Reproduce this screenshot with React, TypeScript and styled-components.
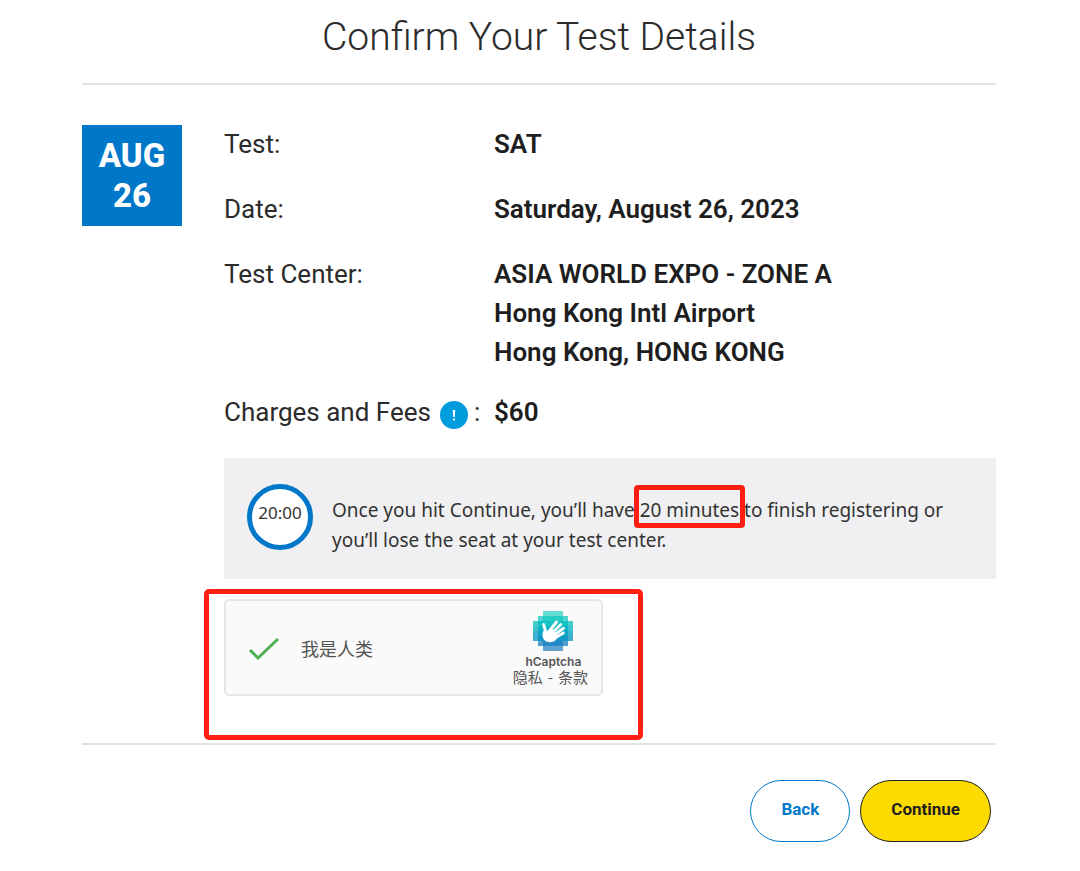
import React from "react";
import styled, { createGlobalStyle } from "styled-components";

const GlobalStyle = createGlobalStyle`
  *, *::before, *::after { box-sizing: border-box; }
  body {
    margin: 0;
    background: #fff;
    color: #2b2b2b;
    font-family: Roboto, "Liberation Sans", sans-serif;
  }
`;

const Page = styled.main`
  padding: 12px 84px 28px 82px;
`;

const Title = styled.h1`
  margin: 0;
  padding-bottom: 21px;
  border-bottom: 2px solid #e2e2e2;
  font-size: 39px;
  line-height: 50px;
  font-weight: 300;
  text-align: center;
`;

const Body = styled.section`
  display: flex;
  align-items: flex-start;
  gap: 42px;
  padding: 40px 0 47px;
  border-bottom: 2px solid #e2e2e2;
`;

const DateBadge = styled.time`
  flex: none;
  display: flex;
  flex-direction: column;
  justify-content: center;
  width: 100px;
  height: 101px;
  background: #0077c8;
  color: #fff;
  font-size: 33px;
  line-height: 40px;
  font-weight: 800;
  text-align: center;
`;

const Content = styled.div`
  flex: 1;
  min-width: 0;
`;

const Details = styled.dl`
  margin: 0 0 26px;
  display: grid;
  grid-template-columns: 270px 1fr;
  font-size: 26px;
  line-height: 39px;
`;

const Label = styled.dt<{ $gap: number }>`
  display: flex;
  align-items: center;
  height: 39px;
  margin-bottom: ${(p) => p.$gap}px;
`;

const Value = styled.dd<{ $gap: number }>`
  margin: 0 0 ${(p) => p.$gap}px;
  color: #1e1e1e;
  font-weight: 600;
`;

const InfoButton = styled.button`
  display: flex;
  width: 28px;
  height: 28px;
  margin: 4px 6px 0 9px;
  padding: 0;
  border: 0;
  border-radius: 50%;
  background: #009cde;
`;

const Notice = styled.div`
  display: flex;
  align-items: center;
  gap: 19px;
  min-height: 121px;
  padding: 0 23px;
  background: #f0f0f2;
  color: #333;
  font-family: "Noto Sans", "Open Sans", sans-serif;
`;

const Timer = styled.div`
  flex: none;
  width: 66px;
  height: 66px;
  margin-bottom: 4px;
  border: 5px solid #0077c8;
  border-radius: 50%;
  background: #fff;
  font-size: 17px;
  line-height: 48px;
  text-align: center;
`;

const NoticeText = styled.p`
  margin: 0;
  padding-top: 12px;
  font-size: 19px;
  line-height: 30px;
`;

const Marked = styled.span`
  position: relative;
  &::after {
    content: "";
    position: absolute;
    inset: -12px -6px -5px;
    border: 5px solid #ff1e12;
    border-radius: 4px;
  }
`;

const CaptchaArea = styled.div`
  position: relative;
  width: 379px;
  margin-top: 20px;
  &::after {
    content: "";
    position: absolute;
    inset: -10px -40px -44px -20px;
    border: 5px solid #ff1e12;
    border-radius: 5px;
    pointer-events: none;
  }
`;

const Captcha = styled.div`
  display: flex;
  align-items: center;
  justify-content: space-between;
  height: 97px;
  padding: 0 13px 0 22px;
  border: 2px solid #e6e6e6;
  border-radius: 5px;
  background: #fafafa;
  color: #555;
  font-family: "Noto Sans CJK SC", sans-serif;
`;

const CheckLabel = styled.label`
  display: flex;
  align-items: center;
  gap: 21px;
  font-size: 18px;
  line-height: 24px;
`;

const CheckMark = styled.span`
  display: grid;
  padding-top: 4px;
  > * { grid-area: 1 / 1; }
`;

const CheckInput = styled.input`
  appearance: none;
  width: 32px;
  height: 26px;
  margin: 0;
  & + svg { visibility: hidden; pointer-events: none; }
  &:checked + svg { visibility: visible; }
`;

const Brand = styled.div`
  display: flex;
  flex-direction: column;
  align-items: center;
`;

const BrandMark = styled.div`
  display: flex;
  flex-direction: column;
  align-items: center;
  gap: 4px;
  padding-left: 6px;
`;

const BrandName = styled.span`
  font-family: Inter, sans-serif;
  font-size: 12px;
  line-height: 14px;
  font-weight: 600;
`;

const BrandLinks = styled.div`
  display: flex;
  gap: 5px;
  font-size: 15px;
  line-height: 16px;
`;

const BrandLink = styled.a`
  color: inherit;
  text-decoration: none;
`;

const Actions = styled.footer`
  display: flex;
  justify-content: flex-end;
  gap: 10px;
  padding: 35px 5px 0 0;
`;

const Button = styled.button<{ $primary?: boolean }>`
  height: 62px;
  padding: 0 30px 5px;
  border: 1px solid ${(p) => (p.$primary ? "#1e1e1e" : "#0077c8")};
  border-radius: 31px;
  background: ${(p) => (p.$primary ? "#fedb00" : "#fff")};
  color: ${(p) => (p.$primary ? "#1e1e1e" : "#0077c8")};
  font-family: inherit;
  font-size: 17px;
  font-weight: 700;
`;

const ROWS: [number, number][] = [[2, 4], [1, 6], [0, 8], [0, 8], [0, 8], [0, 8], [1, 6], [2, 4]];
const ROW_COLORS = ["#3fd6c8", "#26cdc6", "#16c2c4", "#0cb4c4", "#0ca5c5", "#1397c6", "#2589c6", "#3a8ecb"];

const Logo = () => (
  <svg width="40" height="40" viewBox="0 0 40 40" aria-hidden="true">
    {ROWS.map(([start, count], row) =>
      Array.from({ length: count }, (_, i) => {
        const edge = row === 0 || row === 7 || i === 0 || i === count - 1;
        return (
          <rect
            key={`${row}-${i}`}
            x={(start + i) * 5}
            y={row * 5}
            width="5"
            height="5"
            fill={ROW_COLORS[row]}
            opacity={edge ? 0.8 : 1}
            shapeRendering="crispEdges"
          />
        );
      })
    )}
    <g fill="none" stroke="#fff" strokeLinecap="round">
      <path d="M10.500 13.500L12.500 20" strokeWidth="2.800" />
      <path d="M23.500 11L16 20.500M27.800 13.500L19 22M30.500 17.300L20.500 24.500M30.300 22L22 27" strokeWidth="2.900" />
    </g>
    <path
      d="M11 19c2 1.200 3.500 1.400 5 0l3-1.500 6 7.500c-1.200 3.500-3.800 6.200-8 6.200-4.800 0-7.600-3.200-7.500-7.200 0-2 .4-3.500 1.500-5z"
      fill="#fff"
    />
  </svg>
);

const App = () => (
  <>
    <GlobalStyle />
    <Page>
      <Title>Confirm Your Test Details</Title>
      <Body>
        <DateBadge dateTime="2023-08-26">
          <span>AUG</span>
          <span>26</span>
        </DateBadge>
        <Content>
          <Details>
            <Label $gap={26}>Test:</Label>
            <Value $gap={26}>SAT</Value>
            <Label $gap={26}>Date:</Label>
            <Value $gap={26}>Saturday, August 26, 2023</Value>
            <Label $gap={21}>Test Center:</Label>
            <Value $gap={21}>
              ASIA WORLD EXPO - ZONE A
              <br />
              Hong Kong Intl Airport
              <br />
              Hong Kong, HONG KONG
            </Value>
            <Label $gap={0}>
              Charges and Fees
              <InfoButton type="button" aria-label="About charges and fees">
                <svg width="28" height="28" viewBox="0 0 28 28" aria-hidden="true">
                  <path d="M12.800 9h2.400l-.4 7h-1.600zM13 17.600h2v2h-2z" fill="#fff" />
                </svg>
              </InfoButton>
              :
            </Label>
            <Value $gap={0}>$60</Value>
          </Details>
          <Notice>
            <Timer>20:00</Timer>
            <NoticeText>
              Once you hit Continue, you’ll have <Marked>20 minutes</Marked> to finish registering or
              you’ll lose the seat at your test center.
            </NoticeText>
          </Notice>
          <CaptchaArea>
            <Captcha>
              <CheckLabel>
                <CheckMark>
                  <CheckInput type="checkbox" defaultChecked />
                  <svg width="32" height="26" viewBox="0 0 32 26" aria-hidden="true">
                    <path d="M2 13l8 8L30 2" fill="none" stroke="#4caf50" strokeWidth="3" />
                  </svg>
                </CheckMark>
                我是人类
              </CheckLabel>
              <Brand>
                <BrandMark>
                  <Logo />
                  <BrandName>hCaptcha</BrandName>
                </BrandMark>
                <BrandLinks>
                  <BrandLink href="#privacy">隐私</BrandLink>
                  <span>-</span>
                  <BrandLink href="#terms">条款</BrandLink>
                </BrandLinks>
              </Brand>
            </Captcha>
          </CaptchaArea>
        </Content>
      </Body>
      <Actions>
        <Button type="button">Back</Button>
        <Button type="submit" $primary>
          Continue
        </Button>
      </Actions>
    </Page>
  </>
);

export default App;
